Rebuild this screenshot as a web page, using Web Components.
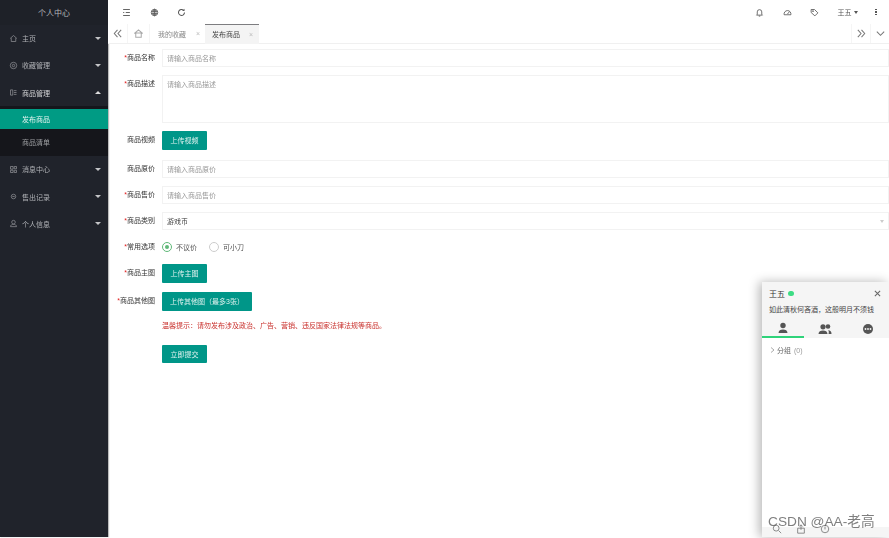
<!DOCTYPE html>
<html lang="zh"><head><meta charset="utf-8"><title>个人中心</title>
<style>
html,body{margin:0;height:100%;overflow:hidden;background:#fff}
body{font-family:"Liberation Sans","Noto Sans CJK SC",sans-serif;font-size:7px;color:#444}
</style></head><body>
<app-shell>
  <side-nav slot="nav" title-text="个人中心">
    <nav-item icon="home" arrow="down">主页</nav-item>
    <nav-item icon="circle" arrow="down">收藏管理</nav-item>
    <nav-item icon="list" arrow="up" open>商品管理</nav-item>
    <nav-group>
      <nav-sub active>发布商品</nav-sub>
      <nav-sub>商品清单</nav-sub>
    </nav-group>
    <nav-item icon="msg" arrow="down">消息中心</nav-item>
    <nav-item icon="rec" arrow="down">售出记录</nav-item>
    <nav-item icon="user" arrow="down">个人信息</nav-item>
  </side-nav>
  <top-bar slot="top"></top-bar>
  <tab-bar slot="tabs"></tab-bar>
  <publish-form slot="main"></publish-form>
</app-shell>
<chat-panel></chat-panel>
<water-mark>CSDN @AA-老高</water-mark>
<script>
const def=(n,html)=>{customElements.define(n,class extends HTMLElement{
  constructor(){super();const s=this.attachShadow({mode:'open'});s.innerHTML=typeof html==='function'?html(this):html;}
});};
const ic={
 home:'<path d="M1.5 6 6 2l4.5 4M3 5.5V10h6V5.5"/>',
 circle:'<circle cx="6" cy="6" r="4.3"/><circle cx="6" cy="6" r="1.6"/>',
 list:'<path d="M2 2.500h3v7H2zM6.500 3.500h3.500M6.500 6h3.500M6.500 8.500h3.500"/>',
 msg:'<path d="M2 2h3.500v3.500H2zM7 2h3v3H7zM2 7h3.500v3H2zM7 7h3v3H7z"/>',
 rec:'<circle cx="6" cy="6" r="3"/><path d="M4.500 6h3"/>',
 user:'<circle cx="6" cy="4.200" r="2.400"/><path d="M2 10.200c0-2.200 1.800-3 4-3s4 .8 4 3z"/>',
 fold:'<path d="M1.500 2h9M1.500 6h1.500M5 6h5.500M1.500 10h9" stroke-width="1.200"/>',
 globe:'<circle cx="6" cy="6" r="4.300"/><path d="M1.700 4.500h8.600M1.700 7.500h8.600M6 1.700v8.600"/><ellipse cx="6" cy="6" rx="2" ry="4.300"/>',
 refresh:'<path d="M10 6a4 4 0 1 1-1.300-3" stroke-width="1.400"/><path d="M10 1v3H7z" fill="#555" stroke="none"/>',
 bell:'<path d="M3 8.500V5.200a3 3 0 0 1 6 0v3.300l1 1H2zM5 10.800h2"/>',
 gauge:'<path d="M1.500 9a4.600 4.600 0 1 1 9 0zM6 8l2.500-3"/>',
 tag:'<path d="M1.500 2h4.500l4.500 4.500L6.500 10.500 1.500 6z"/><circle cx="4" cy="4.200" r=".7"/>'
};
def('app-shell',`<style>
:host{display:grid;grid-template-columns:108px 1fr;grid-template-rows:24px 20px 1fr;height:537px;width:889px;filter:blur(.35px)}
.n{grid-row:1/4;display:block}
</style><slot class="n" name="nav"></slot><slot name="top"></slot><slot name="tabs"></slot><slot name="main"></slot>`);
def('side-nav',h=>`<style>
:host{display:flex;flex-direction:column;background:#20232b;height:537px;box-shadow:1px 0 1px #bbb}
header{height:24.5px;flex:none;background:#1e2128;display:flex;align-items:center;justify-content:center;font-size:8px;color:#b4b6b9}
</style><header>${h.getAttribute('title-text')}</header><slot></slot>`);
def('nav-item',h=>`<style>
:host{display:flex;align-items:center;height:27.3px;padding:0 7px 0 9px;gap:4px;font-size:7px;color:#b0b2b6;flex:none}
:host([open]){color:#d4d5d7}
svg{width:9px;height:9px;fill:none;stroke:#8d8f94;stroke-width:1}
span{flex:1}
i{width:0;height:0;border-left:3px solid transparent;border-right:3px solid transparent;${h.getAttribute('arrow')=='up'?'border-bottom:3px solid #dcdcdc':'border-top:3px solid #c4c5c8'}}
</style><svg viewBox="0 0 12 12">${ic[h.getAttribute('icon')]}</svg><span><slot></slot></span><i></i>`);
def('nav-group',`<style>
:host{display:flex;flex-direction:column;flex:none;height:49.3px;padding-top:2.5px;box-sizing:border-box;background:#15161b}
</style><slot></slot>`);
def('nav-sub',`<style>
:host{display:flex;align-items:center;flex:1;padding-left:22px;font-size:7px;color:#9d9fa2}
:host([active]){background:#009b84;color:#e2f3ef;flex:none;height:19.7px}
</style><slot></slot>`);
def('tb-icon',h=>`<style>
:host{display:inline-flex}svg{width:9px;height:9px;fill:none;stroke:#555;stroke-width:1.1}
</style><svg viewBox="0 0 12 12">${ic[h.getAttribute('name')]}</svg>`);
def('top-bar',`<style>
:host{display:flex;align-items:center;height:24px;padding:0 12px 0 14px;font-size:7px;color:#555;background:#fff}
.l,.r{display:flex;align-items:center}
.l{gap:18.5px}.r{margin-left:auto;gap:18.5px}
.u{display:flex;align-items:center;gap:2px;color:#555}
.u i{border-left:2.5px solid transparent;border-right:2.5px solid transparent;border-top:3px solid #555}
.d{width:2px;display:flex;flex-direction:column;gap:1px;margin-left:-1px}.d b{height:1.5px;background:#555}
</style>
<div class="l"><tb-icon name="fold"></tb-icon><tb-icon name="globe"></tb-icon><tb-icon name="refresh"></tb-icon></div>
<div class="r"><tb-icon name="bell"></tb-icon><tb-icon name="gauge"></tb-icon><tb-icon name="tag"></tb-icon>
<div class="u">王五<i></i></div><div class="d"><b></b><b></b><b></b></div></div>`);
def('tab-item',`<style>
:host{display:flex;align-items:center;flex:none;height:20px;padding:0 4px 0 8px;gap:10px;color:#888;font-size:7px;box-sizing:border-box;width:55px;white-space:nowrap}
:host([active]){background:#f4f4f4;color:#444;border-top:1px solid #7d7d80;width:54px;padding-left:7px;gap:9px}
u{text-decoration:none;color:#bbb;font-size:7px}
</style><slot></slot><u>×</u>`);
def('tab-bar',`<style>
:host{display:flex;align-items:center;height:20px;border-bottom:1px solid #f0f0f0;box-sizing:border-box;background:#fff}
.b{display:flex;align-items:center;justify-content:center;height:19px;border-right:1px solid #f5f5f5;box-sizing:border-box;flex:none}
svg{width:11px;height:11px;fill:none;stroke:#777;stroke-width:1.1}
.sp{flex:1}
</style>
<div class="b" style="width:20px"><svg viewBox="0 0 12 12"><path d="M6 2 2.500 6 6 10M10 2 6.500 6 10 10"/></svg></div>
<div class="b" style="width:22px"><svg viewBox="0 0 12 12" style="stroke:#aaa"><path d="M1.500 6 6 2l4.500 4M3 5.500V10h6V5.500z"/></svg></div>
<tab-item>我的收藏</tab-item><tab-item active>发布商品</tab-item>
<div class="sp"></div>
<div class="b" style="width:20px;border-left:1px solid #f5f5f5"><svg viewBox="0 0 12 12"><path d="M2 2 5.500 6 2 10M6 2 9.500 6 6 10"/></svg></div>
<div class="b" style="width:18px;border:0"><svg viewBox="0 0 12 12"><path d="M2 4l4 4 4-4"/></svg></div>`);
def('form-row',h=>`<style>
:host{display:flex;align-items:center;gap:7px;min-height:18px}
:host([top]){align-items:flex-start}
label{width:47px;flex:none;text-align:right;color:#333;font-size:7px;line-height:18px;white-space:nowrap}
b{color:#e02020;font-weight:400}
.c{flex:1;min-width:0;display:flex;align-items:center}
</style><label>${h.hasAttribute('req')?'<b>*</b>':''}${h.getAttribute('label')}</label><div class="c"><slot></slot></div>`);
def('text-box',h=>`<style>
:host{flex:1;box-sizing:border-box;height:${h.getAttribute('h')||18}px;border:1px solid #f2f2f2;padding:${h.hasAttribute('area')?'3px':'0'} 4px;font-size:7px;color:${h.hasAttribute('val')?'#444':'#999'};background:#fff;display:${h.hasAttribute('area')?'block':'flex'};align-items:center}
</style><slot></slot>`);
def('green-btn',`<style>
:host{display:inline-flex;align-items:center;justify-content:center;height:18.5px;padding:0 8.5px;background:#009688;color:#dff2ef;font-size:7px;border-radius:1px;white-space:nowrap;box-sizing:border-box}
</style><slot></slot>`);
def('radio-opt',h=>`<style>
:host{display:inline-flex;align-items:center;gap:4px;font-size:7px;color:#555;margin-right:12px}
i{width:8px;height:8px;border-radius:50%;border:1px solid ${h.hasAttribute('on')?'#5fb878':'#ccc'};display:flex;align-items:center;justify-content:center}
i b{width:4px;height:4px;border-radius:50%;background:${h.hasAttribute('on')?'#5fb878':'transparent'}}
</style><i><b></b></i><slot></slot>`);
def('publish-form',`<style>
:host{display:flex;flex-direction:column;padding-top:5px;box-sizing:border-box}
form-row{flex:none}
.tip{margin:0 0 0 54px;font-size:7px;color:#c9302c;line-height:10px}
i{display:block;border-left:2.5px solid transparent;border-right:2.5px solid transparent;border-top:3px solid #ccc;margin-right:1px}
</style>
<form-row req label="商品名称" style="margin-bottom:8px"><text-box>请输入商品名称</text-box></form-row>
<form-row req top label="商品描述" style="margin-bottom:8px"><text-box area h="48">请输入商品描述</text-box></form-row>
<form-row label="商品视频" style="margin-bottom:10.5px"><green-btn>上传视频</green-btn></form-row>
<form-row label="商品原价" style="margin-bottom:8px"><text-box>请输入商品原价</text-box></form-row>
<form-row req label="商品售价" style="margin-bottom:8px"><text-box>请输入商品售价</text-box></form-row>
<form-row req label="商品类别" style="margin-bottom:8px"><text-box val style="justify-content:space-between;padding-right:3px">游戏币<i></i></text-box></form-row>
<form-row req label="常用选项" style="margin-bottom:8px"><radio-opt on>不议价</radio-opt><radio-opt>可小刀</radio-opt></form-row>
<form-row req label="商品主图" style="margin-bottom:9.5px"><green-btn>上传主图</green-btn></form-row>
<form-row req label="商品其他图" style="margin-bottom:10px"><green-btn style="padding:0 8px">上传其他图（最多3张）</green-btn></form-row>
<p class="tip">温馨提示：请勿发布涉及政治、广告、营销、违反国家法律法规等商品。</p>
<form-row label="" style="margin-top:14px"><green-btn>立即提交</green-btn></form-row>`);
def('chat-panel',`<style>
:host{position:absolute;left:762px;top:282px;width:127px;height:255px;background:#fff;box-shadow:-3px 0 10px rgba(0,0,0,.28);display:flex;flex-direction:column;font-size:7px;color:#333;filter:blur(.3px)}
.h{background:#f5f5f5;height:56px;box-sizing:border-box;padding:6px 7px 0;flex:none;position:relative}
.n{display:flex;align-items:center;gap:3px;font-size:8px;height:11px}
.n i{width:5.5px;height:5.5px;border-radius:50%;background:#3ddc84}
.x{position:absolute;right:8px;top:7.5px;width:7px;height:7px;stroke:#666;stroke-width:1.2}
.s{font-size:7px;margin-top:6px;line-height:10px;white-space:nowrap;color:#444}
.t{display:flex;position:absolute;left:0;right:0;bottom:0;height:19px}
.t div{flex:1;display:flex;align-items:center;justify-content:center;box-sizing:border-box}
.t div.on{border-bottom:2px solid #2fd37a}
.t svg{width:12px;height:12px;fill:#555}
.g{padding:7px 8px;color:#666;display:flex;gap:2px;align-items:center;flex:none}
.g u{text-decoration:none;color:#999;margin-left:1px}
.g svg{width:5px;height:6px;fill:none;stroke:#aaa}
.f{margin-top:auto;height:10px;background:#f5f5f5;display:flex;gap:14px;padding:0 10px;align-items:flex-start;flex:none}
.f svg{width:10px;height:10px;fill:none;stroke:#777;margin-top:-3px}
</style>
<div class="h"><div class="n">王五<i></i></div>
<svg class="x" viewBox="0 0 8 8"><path d="M1 1l6 6M7 1 1 7"/></svg>
<div class="s">如此清秋何吝酒，这般明月不须钱</div>
<div class="t"><div class="on"><svg viewBox="0 0 12 12"><circle cx="6" cy="3.500" r="2.700"/><path d="M1.500 11c0-2.500 2-3.500 4.500-3.500s4.500 1 4.500 3.500z"/></svg></div>
<div><svg viewBox="0 0 14 12" style="width:14px"><circle cx="5" cy="3.800" r="2.600"/><circle cx="10" cy="3.500" r="2.300"/><path d="M.5 11c0-2.500 2-3.500 4.500-3.500S9.500 8.500 9.500 11zM10.500 11h3c0-2.500-1-3.500-3.500-3.700 1 .8 1 2 .5 3.700z"/></svg></div>
<div><svg viewBox="0 0 12 12"><circle cx="6" cy="6" r="5"/><g fill="#f5f5f5"><circle cx="3.500" cy="6" r=".9"/><circle cx="6" cy="6" r=".9"/><circle cx="8.500" cy="6" r=".9"/></g></svg></div></div></div>
<div class="g"><svg viewBox="0 0 5 6"><path d="M1 .5 4 3 1 5.500"/></svg><span>分组</span><u>(0)</u></div>
<div class="f"><svg viewBox="0 0 12 12"><circle cx="5" cy="5" r="3.500"/><path d="M8 8l3 3"/></svg><svg viewBox="0 0 12 12"><path d="M2 5h8v6H2zM6 1v6M4 3l2-2 2 2"/></svg><svg viewBox="0 0 12 12"><circle cx="6" cy="6" r="4.500"/><path d="M6 3v3.500"/></svg></div>`);
def('water-mark',`<style>
:host{position:absolute;left:768px;top:513px;font-size:13.7px;line-height:18px;color:rgba(90,90,90,.78);white-space:nowrap;filter:blur(.3px)}
</style><slot></slot>`);
</script>
</body></html>
